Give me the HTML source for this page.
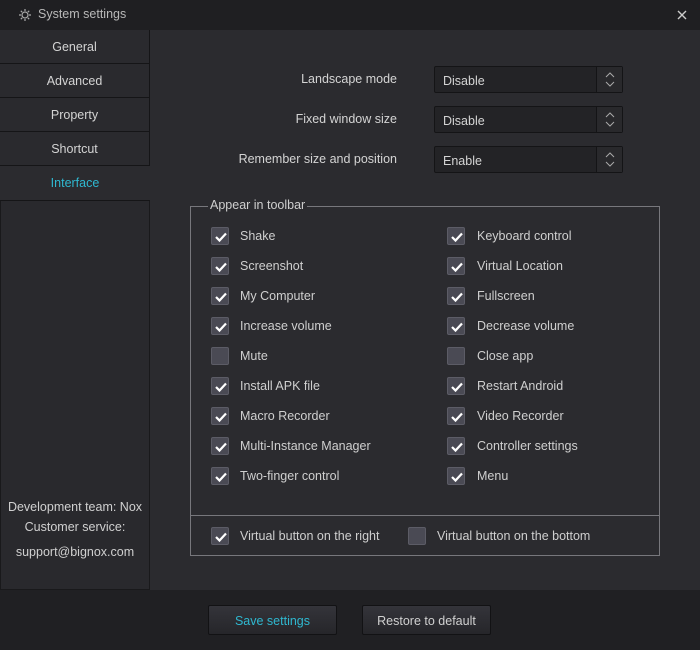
<!DOCTYPE html>
<html><head><style>
*{margin:0;padding:0;box-sizing:border-box}
body{width:700px;height:650px;background:#2b2b2f;font-family:"Liberation Sans",sans-serif;font-size:12.5px;color:#d0d0d0;position:relative;overflow:hidden}
.abs{position:absolute}
.title{left:0;top:0;width:700px;height:30px;background:#1f1f22}
.tab{position:absolute;left:0;width:150px;height:34px;background:#2a2a2e;border-bottom:1px solid #151517;border-right:1px solid #151517;text-align:center;line-height:35px;color:#d4d4d4}
.side{left:0;top:200px;width:150px;height:390px;background:#29292d;border:1px solid #19191b;border-top:1px solid #151517}
.lbl{position:absolute;text-align:right;right:303px;color:#d4d4d4}
.sel{position:absolute;left:434px;width:189px;height:27px;background:#232326;border:1px solid #141416;border-radius:2px;padding-left:8px;line-height:28px;color:#d4d4d4}
.sel .ar{position:absolute;right:0;top:0;width:26px;height:25px;border-left:1px solid #141416;background:#29292c}
.cb{position:absolute;width:18px;height:18px;background:#4a4a54;border:1px solid #5c5c66;border-radius:2px}
.cb svg{position:absolute;left:2px;top:2px}
.t{position:absolute;color:#cfcfcf}
.btn{position:absolute;top:605px;width:129px;height:30px;background:linear-gradient(#34343a,#26262a);border:1px solid #121214;border-radius:2px;text-align:center;line-height:31px}
</style></head><body>
<div class="abs title">
<svg class="abs" style="left:19px;top:9px" width="12" height="12" viewBox="0 0 12 12"><circle cx="6" cy="6" r="3" fill="none" stroke="#aaa" stroke-width="1.2"/><g stroke="#aaa" stroke-width="1.2"><path d="M6 0v2M6 10v2M0 6h2M10 6h2M1.8 1.8l1.4 1.4M8.8 8.8l1.4 1.4M1.8 10.2l1.4-1.4M8.8 3.2l1.4-1.4"/></g></svg>
<div class="abs" style="left:38px;top:7px;color:#b8b8b8">System settings</div>
<svg class="abs" style="left:677px;top:10px" width="10" height="10"><path d="M1 1l8 8M9 1l-8 8" stroke="#ccc" stroke-width="1.4"/></svg>
</div>
<div class="tab" style="top:30px">General</div>
<div class="tab" style="top:64px">Advanced</div>
<div class="tab" style="top:98px">Property</div>
<div class="tab" style="top:132px">Shortcut</div>
<div class="abs" style="left:0;top:166px;width:150px;height:34px;text-align:center;line-height:35px;color:#2fb8d0">Interface</div>
<div class="abs side"></div>
<div class="abs" style="left:0;top:497px;width:150px;text-align:center;line-height:20px;color:#d0d0d0">Development team: Nox<br>Customer service:<br><span style="line-height:30px">support@bignox.com</span></div>
<div class="abs" style="left:0;top:590px;width:700px;height:60px;background:#202023"></div>

<div class="lbl" style="top:72px">Landscape mode</div>
<div class="lbl" style="top:112px">Fixed window size</div>
<div class="lbl" style="top:152px">Remember size and position</div>
<div class="sel" style="top:66px">Disable<div class="ar"><svg width="26" height="25"><path d="M9 10l4-4 4 4M9 15l4 4 4-4" fill="none" stroke="#aaa"/></svg></div></div>
<div class="sel" style="top:106px">Disable<div class="ar"><svg width="26" height="25"><path d="M9 10l4-4 4 4M9 15l4 4 4-4" fill="none" stroke="#aaa"/></svg></div></div>
<div class="sel" style="top:146px">Enable<div class="ar"><svg width="26" height="25"><path d="M9 10l4-4 4 4M9 15l4 4 4-4" fill="none" stroke="#aaa"/></svg></div></div>

<div class="abs" style="left:190px;top:206px;width:470px;height:350px;border:1px solid #77777c"></div>
<div class="abs" style="left:191px;top:515px;width:468px;height:1px;background:#77777c"></div>
<div class="abs" style="left:208px;top:198px;padding:0 2px;background:#2b2b2f;color:#cfcfcf">Appear in toolbar</div>

<div id="cbs"></div>
<script>
var L=["Shake","Screenshot","My Computer","Increase volume","Mute","Install APK file","Macro Recorder","Multi-Instance Manager","Two-finger control"];
var R=["Keyboard control","Virtual Location","Fullscreen","Decrease volume","Close app","Restart Android","Video Recorder","Controller settings","Menu"];
var ck='<svg width="14" height="14"><path d="M2 7l3.5 3.5L12 3.5" fill="none" stroke="#fff" stroke-width="2.2"/></svg>';
var h="";
function add(x,y,t,c,tx){h+='<div class="cb" style="left:'+x+'px;top:'+(y-9)+'px">'+(c?ck:'')+'</div><div class="t" style="left:'+tx+'px;top:'+(y-7)+'px">'+t+'</div>';}
for(var i=0;i<9;i++){var y=236+30*i;add(211,y,L[i],i!=4,240);add(447,y,R[i],i!=4,477);}
add(211,536,"Virtual button on the right",1,240);add(408,536,"Virtual button on the bottom",0,437);
document.getElementById("cbs").innerHTML=h;
</script>
<div class="btn" style="left:208px;color:#2fb8d0">Save settings</div>
<div class="btn" style="left:362px">Restore to default</div>
</body></html>
